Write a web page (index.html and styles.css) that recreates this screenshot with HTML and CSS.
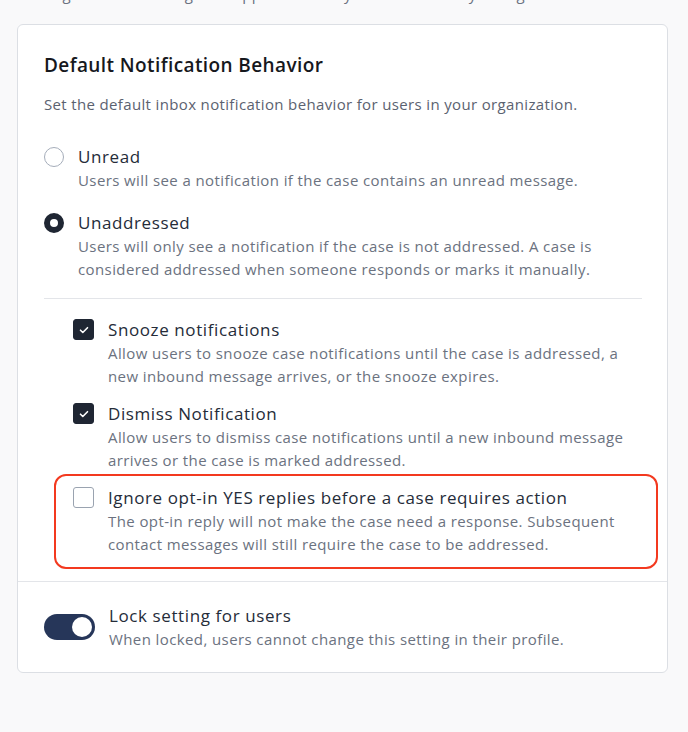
FILE: index.html
```html
<!DOCTYPE html>
<html>
<head>
    <title>Notification Settings</title>
    <link rel="stylesheet" href="styles.css">
</head>
<body>
    <p class="page-intro">Organization settings are applied to every user unless they change them in their settings.</p>
    <div class="card">
        <div class="card-body">
            <h2>Default Notification Behavior</h2>
            <p class="intro">Set the default inbox notification behavior for users in your organization.</p>

            <div class="option">
                <span class="radio"></span>
                <div class="text">
                    <div class="label">Unread</div>
                    <div class="desc">Users will see a notification if the case contains an unread message.</div>
                </div>
            </div>
            <div class="option">
                <span class="radio checked"></span>
                <div class="text">
                    <div class="label">Unaddressed</div>
                    <div class="desc">Users will only see a notification if the case is not addressed. A case is considered addressed when someone responds or marks it manually.</div>
                </div>
            </div>

            <div class="divider"></div>

            <div class="sub-options">
                <div class="option">
                    <span class="checkbox checked">
                        <svg width="12" height="12" viewBox="0 0 12 12"><path d="M2.5 6.2l2.3 2.3 4.7-4.8" fill="none" stroke="#fff" stroke-width="1.6" stroke-linecap="round" stroke-linejoin="round"/></svg>
                    </span>
                    <div class="text">
                        <div class="label">Snooze notifications</div>
                        <div class="desc">Allow users to snooze case notifications until the case is addressed, a new inbound message arrives, or the snooze expires.</div>
                    </div>
                </div>
                <div class="option">
                    <span class="checkbox checked">
                        <svg width="12" height="12" viewBox="0 0 12 12"><path d="M2.5 6.2l2.3 2.3 4.7-4.8" fill="none" stroke="#fff" stroke-width="1.6" stroke-linecap="round" stroke-linejoin="round"/></svg>
                    </span>
                    <div class="text">
                        <div class="label">Dismiss Notification</div>
                        <div class="desc">Allow users to dismiss case notifications until a new inbound message arrives or the case is marked addressed.</div>
                    </div>
                </div>
                <div class="option highlighted">
                    <span class="checkbox"></span>
                    <div class="text">
                        <div class="label">Ignore opt-in YES replies before a case requires action</div>
                        <div class="desc">The opt-in reply will not make the case need a response. Subsequent contact messages will still require the case to be addressed.</div>
                    </div>
                </div>
            </div>
        </div>
        <div class="card-footer">
            <div class="option">
                <span class="toggle on"><span class="knob"></span></span>
                <div class="text">
                    <div class="label">Lock setting for users</div>
                    <div class="desc">When locked, users cannot change this setting in their profile.</div>
                </div>
            </div>
        </div>
    </div>
</body>
</html>
```

FILE: styles.css
```css
body {
    font-family: "Open Sans", sans-serif;
    background-color: #f9f9fa;
    margin: 0;
    padding: 0 20px 0 17px;
    color: #2d3340;
}
.page-intro {
    margin: -16px 0 0 27px;
    height: 40px;
    line-height: 20px;
    font-size: 15px;
    letter-spacing: 0.4px;
    color: #6b7280;
    white-space: nowrap;
    overflow: hidden;
}
.card {
    background: white;
    border: 1px solid #dcdfe4;
    border-radius: 6px;
}
.card-body {
    padding: 27px 25px 11px 26px;
}
h2 {
    margin: 0 0 15px;
    font-size: 19px;
    line-height: 26px;
    font-weight: 600;
    letter-spacing: 0.4px;
    color: #16181d;
}
.intro {
    margin: 0 0 29px;
    font-size: 15px;
    line-height: 23px;
    letter-spacing: 0.35px;
    color: #5b6270;
}
.option {
    display: flex;
    gap: 14px;
    margin-bottom: 19px;
}
.sub-options .option {
    margin-bottom: 14px;
}
.card-footer .option {
    margin-bottom: 0;
}
.text {
    flex: 1;
}
.label {
    font-size: 17px;
    font-weight: 500;
    letter-spacing: 0.6px;
    color: #252c39;
    line-height: 24px;
}
.desc {
    font-size: 15px;
    letter-spacing: 0.4px;
    color: #6b7280;
    line-height: 23px;
}
.radio {
    width: 20px;
    height: 20px;
    box-sizing: border-box;
    border: 1px solid #a5adba;
    border-radius: 50%;
    margin-top: 2px;
    flex-shrink: 0;
}
.radio.checked {
    border: 6px solid #1f2633;
}
.divider {
    border-top: 1px solid #e3e5e9;
    margin: -2px 0 19px;
}
.sub-options {
    padding-left: 29px;
}
.checkbox {
    width: 21px;
    height: 21px;
    box-sizing: border-box;
    border: 1.5px solid #9aa3b0;
    border-radius: 3px;
    margin-top: 1px;
    flex-shrink: 0;
    display: flex;
    align-items: center;
    justify-content: center;
}
.checkbox.checked {
    background: #1f2633;
    border-color: #1f2633;
}
.highlighted {
    position: relative;
}
.highlighted::before {
    content: "";
    position: absolute;
    left: -19px;
    right: -16px;
    top: -12px;
    bottom: -13px;
    border: 2px solid #f3391f;
    border-radius: 12px;
}
.card-footer {
    border-top: 1px solid #e3e5e9;
    padding: 22px 25px 21px 26px;
}
.toggle {
    width: 51px;
    height: 26px;
    border-radius: 13px;
    background: #263659;
    position: relative;
    flex-shrink: 0;
    margin-top: 10px;
}
.toggle .knob {
    position: absolute;
    right: 3px;
    top: 3px;
    width: 20px;
    height: 20px;
    border-radius: 50%;
    background: white;
}
```
